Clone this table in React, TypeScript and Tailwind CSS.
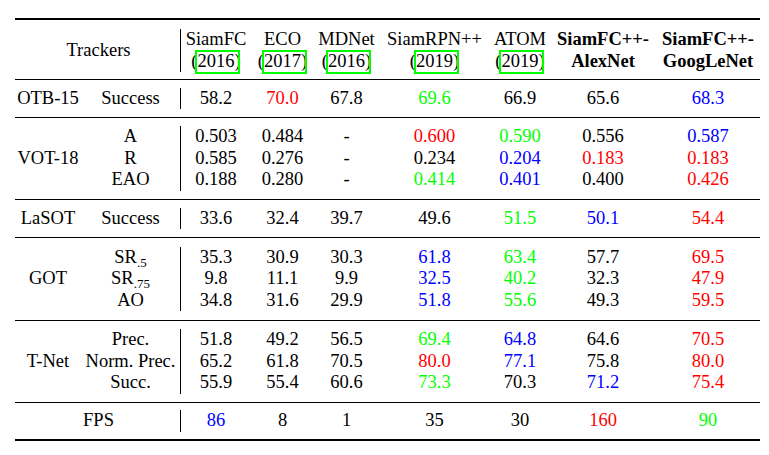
import React from 'react';

type Cell = [string, string?];

const R = 'text-[#ff0000]';
const G = 'text-[#00ff00]';
const B = 'text-[#0000ff]';

// data column widths, left to right
const colW = ['w-[70px]', 'w-[63px]', 'w-[65px]', 'w-[111px]', 'w-[60px]', 'w-[106px]', 'w-[104px]'];

interface Section {
  group?: string;
  label?: string;
  metrics: React.ReactNode[];
  rows: Cell[][];
  h: string;
}

const sections: Section[] = [
  {
    group: 'OTB-15',
    metrics: ['Success'],
    rows: [[['58.2'], ['70.0', R], ['67.8'], ['69.6', G], ['66.9'], ['65.6'], ['68.3', B]]],
    h: 'h-[37px]',
  },
  {
    group: 'VOT-18',
    metrics: ['A', 'R', 'EAO'],
    rows: [
      [['0.503'], ['0.484'], ['-'], ['0.600', R], ['0.590', G], ['0.556'], ['0.587', B]],
      [['0.585'], ['0.276'], ['-'], ['0.234'], ['0.204', B], ['0.183', R], ['0.183', R]],
      [['0.188'], ['0.280'], ['-'], ['0.414', G], ['0.401', B], ['0.400'], ['0.426', R]],
    ],
    h: 'h-[81px]',
  },
  {
    group: 'LaSOT',
    metrics: ['Success'],
    rows: [[['33.6'], ['32.4'], ['39.7'], ['49.6'], ['51.5', G], ['50.1', B], ['54.4', R]]],
    h: 'h-[37px]',
  },
  {
    group: 'GOT',
    metrics: [
      <>SR<span className="relative top-[4px] text-[13px] leading-none">.5</span></>,
      <>SR<span className="relative top-[4px] text-[13px] leading-none">.75</span></>,
      'AO',
    ],
    rows: [
      [['35.3'], ['30.9'], ['30.3'], ['61.8', B], ['63.4', G], ['57.7'], ['69.5', R]],
      [['9.8'], ['11.1'], ['9.9'], ['32.5', B], ['40.2', G], ['32.3'], ['47.9', R]],
      [['34.8'], ['31.6'], ['29.9'], ['51.8', B], ['55.6', G], ['49.3'], ['59.5', R]],
    ],
    h: 'h-[82px]',
  },
  {
    group: 'T-Net',
    metrics: ['Prec.', 'Norm. Prec.', 'Succ.'],
    rows: [
      [['51.8'], ['49.2'], ['56.5'], ['69.4', G], ['64.8', B], ['64.6'], ['70.5', R]],
      [['65.2'], ['61.8'], ['70.5'], ['80.0', R], ['77.1', B], ['75.8'], ['80.0', R]],
      [['55.9'], ['55.4'], ['60.6'], ['73.3', G], ['70.3'], ['71.2', B], ['75.4', R]],
    ],
    h: 'h-[81px]',
  },
  {
    label: 'FPS',
    metrics: [],
    rows: [[['86', B], ['8'], ['1'], ['35'], ['30'], ['160', R], ['90', G]]],
    h: 'h-[36px]',
  },
];

function Cite({ year }: { year: string }) {
  return (
    <span>
      (
      <span className="relative">
        {year}
        <span className="absolute left-[-2.5px] right-[-5.5px] top-[-1px] bottom-[-3px] border-2 border-[#00ff00]" />
      </span>
      )
    </span>
  );
}

const header: React.ReactNode[][] = [
  ['SiamFC', <Cite year="2016" />],
  ['ECO', <Cite year="2017" />],
  ['MDNet', <Cite year="2016" />],
  ['SiamRPN++', <Cite year="2019" />],
  ['ATOM', <Cite year="2019" />],
  [<b>SiamFC++-</b>, <b>AlexNet</b>],
  [<b>SiamFC++-</b>, <b>GoogLeNet</b>],
];

function Rule({ thick }: { thick?: boolean }) {
  return <div className={thick ? 'h-[2px] bg-black' : 'h-px bg-black'} />;
}

export default function App() {
  return (
    <div className="w-[769px] h-[455px] bg-white pt-[18px] pl-[15px] font-[family-name:Liberation_Serif,serif] text-[18.5px] leading-[21.5px] text-black">
      <div className="w-[745px]">
        <Rule thick />

        {/* header */}
        <div className="flex items-center h-[59px] pt-[2px]">
          <div className="w-[165px] text-center pl-[2px]">Trackers</div>
          <div className="flex border-l border-black">
            {header.map((lines, i) => (
              <div key={i} className={`${colW[i]} flex flex-col items-center whitespace-nowrap`}>
                <div>{lines[0]}</div>
                <div>{lines[1]}</div>
              </div>
            ))}
          </div>
        </div>

        {sections.map((s, si) => (
          <React.Fragment key={si}>
            <Rule />
            <div className={`flex items-center ${s.h}`}>
              {s.label ? (
                <div className="w-[165px] text-center pl-[2px]">{s.label}</div>
              ) : (
                <>
                  <div className="w-[66px] text-center">{s.group}</div>
                  <div className="w-[99px] flex flex-col items-center">
                    {s.metrics.map((m, mi) => (
                      <div key={mi} className="whitespace-nowrap">{m}</div>
                    ))}
                  </div>
                </>
              )}
              <div className="flex border-l border-black">
                {colW.map((w, ci) => (
                  <div key={ci} className={`${w} flex flex-col items-center`}>
                    {s.rows.map((row, ri) => (
                      <div key={ri} className={row[ci][1] ?? ''}>
                        {row[ci][0]}
                      </div>
                    ))}
                  </div>
                ))}
              </div>
            </div>
          </React.Fragment>
        ))}

        <Rule thick />
      </div>
    </div>
  );
}
